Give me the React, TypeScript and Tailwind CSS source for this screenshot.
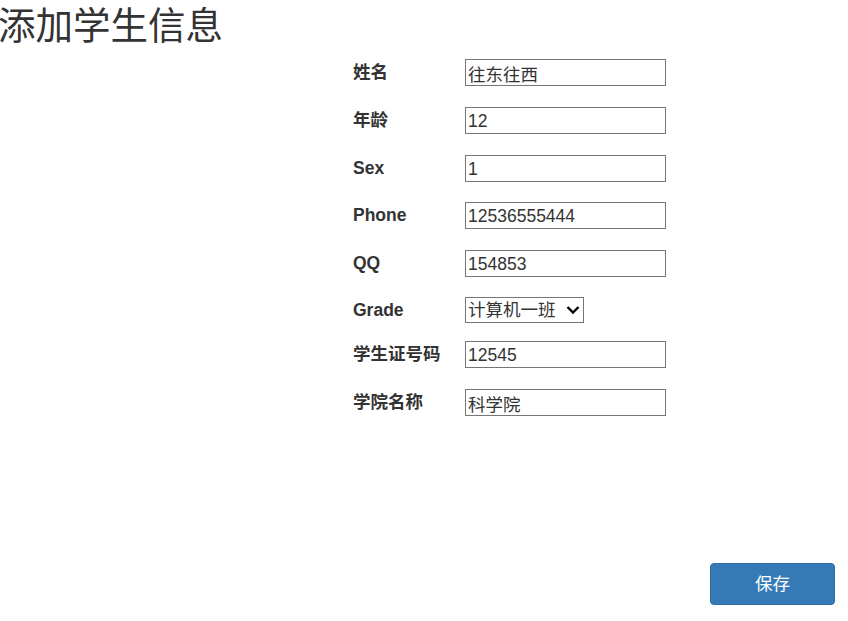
const FONT = "font-['Liberation_Sans','Noto_Sans_CJK_SC',sans-serif]";

const ROWS = [
  { label: "姓名", value: "往东往西", h: "h-[48px]" },
  { label: "年龄", value: "12", h: "h-[48px]" },
  { label: "Sex", value: "1", h: "h-[47px]" },
  { label: "Phone", value: "12536555444", h: "h-[48px]" },
  { label: "QQ", value: "154853", h: "h-[47px]" },
];

const ROWS_AFTER = [
  { label: "学生证号码", value: "12545", h: "h-[48px]" },
  { label: "学院名称", value: "科学院", h: "h-[48px]" },
];

function Field({ label, value, h }: { label: string; value: string; h: string }) {
  return (
    <div className={`flex items-start ${h}`}>
      <div className="w-[112px] pt-[1px] text-[17.5px] font-bold leading-[25px] text-[#333]">{label}</div>
      <input
        readOnly
        value={value}
        className="h-[27px] w-[201px] border border-[#767676] bg-white px-[2px] pt-[2px] text-[17.5px] leading-[23px] text-[#333] outline-none"
      />
    </div>
  );
}

export default function App() {
  return (
    <div className={`relative h-[621px] w-[848px] bg-white ${FONT}`}>
      <h2 className="ml-[-2px] pt-[4px] text-[37.5px] font-normal leading-[44px] text-[#333]">添加学生信息</h2>
      <div className="ml-[353px] mt-[11px] flex flex-col">
        {ROWS.map((r) => (
          <Field key={r.label} {...r} />
        ))}
        <div className="flex h-[44px] items-start">
          <div className="w-[112px] pt-[1px] text-[17.5px] font-bold leading-[25px] text-[#333]">Grade</div>
          <div className="flex h-[26px] w-[119px] items-center justify-between border border-[#767676] bg-white pl-[2px] pr-[3px] text-[17.5px] leading-[24px] text-[#333]">
            <span>计算机一班</span>
            <svg width="14" height="10" viewBox="0 0 14 10" fill="none">
              <path d="M1.5 2 L7 7.5 L12.5 2" stroke="#000" strokeWidth="2.4" />
            </svg>
          </div>
        </div>
        {ROWS_AFTER.map((r) => (
          <Field key={r.label} {...r} />
        ))}
      </div>
      <div className="mt-[126px] flex justify-end pr-[13px]">
        <button className="h-[42px] w-[125px] rounded-[4px] border border-[#2e6da4] bg-[#337ab7] text-[17.5px] text-white">
          保存
        </button>
      </div>
    </div>
  );
}
